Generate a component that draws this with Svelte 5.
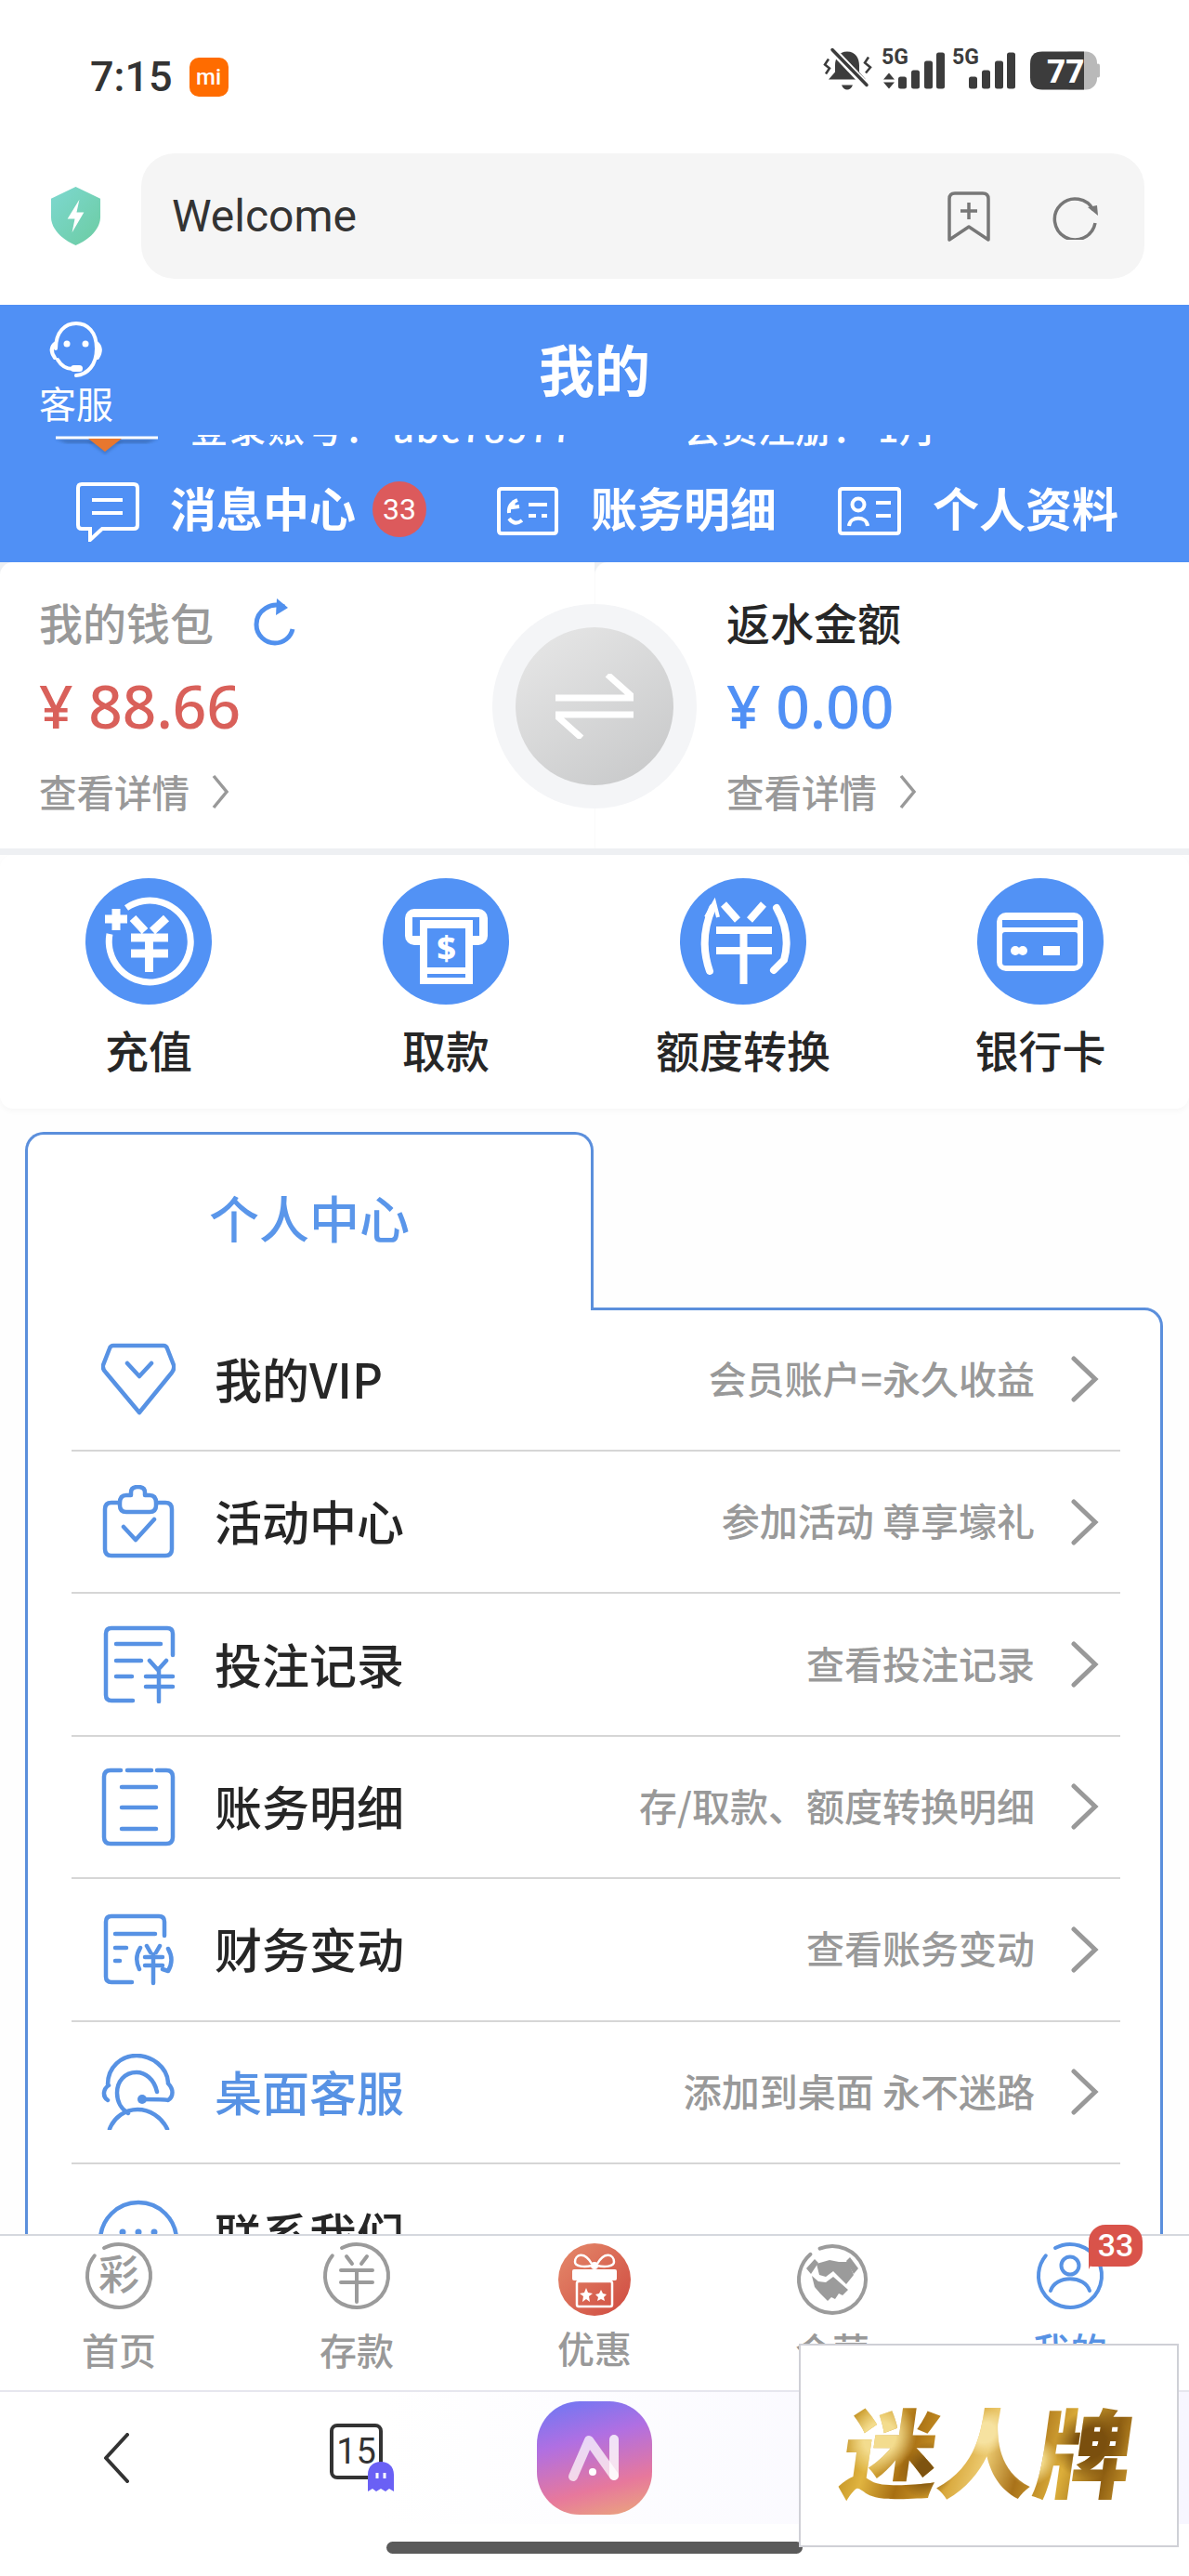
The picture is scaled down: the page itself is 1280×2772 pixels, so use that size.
<script>
  const tabs = [
    { label: '首页', id: 'home' },
    { label: '存款', id: 'deposit' },
    { label: '优惠', id: 'gift' },
    { label: '合营', id: 'deal' },
    { label: '我的', id: 'me' }
  ];
</script>

{#snippet row(label, sub, icon, blue)}
  <div class="row">
    <div class="ricon">{@render icon()}</div>
    <div class="rlabel" class:blue>{label}</div>
    {#if sub}
      <div class="rsub">{sub}</div>
      <svg class="chev" viewBox="0 0 30 50"><path d="M3 3 L26 25 L3 47" /></svg>
    {/if}
  </div>
{/snippet}

{#snippet vip()}
  <svg class="ri" viewBox="0 0 80 80"><path d="M13 4 H67 Q70 4 71 7 L78 25 Q79 29 76 33 L41 76 L5 33 Q1 29 2 25 L9 7 Q10 4 13 4Z M28 23 L41 37 L54 23" /></svg>
{/snippet}
{#snippet act()}
  <svg class="ri" viewBox="0 0 80 80"><path d="M18 19 H11 Q4 19 4 26 V69 Q4 76 11 76 H69 Q76 76 76 69 V26 Q76 19 69 19 H60 M32 11 V8 Q32 2 39.500 2 Q47 2 47 8 V11 H52 Q59 11 59 19 V22 Q59 29 52 29 H27 Q20 29 20 22 V19 Q20 11 27 11Z M24 45 L37 59 L57 37" /></svg>
{/snippet}
{#snippet bet()}
  <svg class="ri" viewBox="0 0 80 84"><path d="M34 81 H11 Q5 81 5 75 V9 Q5 3 11 3 H71 Q77 3 77 9 V32 M16 20 H64 M16 38 H43 M16 55 H33 M52 38 L61 48 L70 38 M48 55 H77 M48 66 H77 M62 48 V82" /></svg>
{/snippet}
{#snippet ledger()}
  <svg class="ri" viewBox="0 0 80 85"><path d="M21 3 H10 Q3 3 3 10 V75 Q3 82 10 82 H70 Q77 82 77 75 V10 Q77 3 70 3 H60 M28 3 H54 M22 21 H59 M22 43 H59 M22 66 H59" /></svg>
{/snippet}
{#snippet fin()}
  <svg class="ri" viewBox="0 0 80 78"><path d="M33 74 H11 Q5 74 5 68 V9 Q5 3 11 3 H62 Q68 3 68 9 V24 M15 22 H58 M15 37 H27 M15 51 H20 M42 37 Q35 48 41 60 M72 38 Q79 50 72 62 L66 60 M49 35 L53 42 M63 35 L59 42 M47 47 H66 M47 56 H66 M56 44 V75" /></svg>
{/snippet}
{#snippet desk()}
  <svg class="ri" viewBox="0 0 80 82"><path d="M7 33 C7 14 22 2 38 2 S71 14 72 31 M8 34 C2 38 1 46 7 50 M72 32 C78 38 78 46 72 50 Q70 49 44 49 M60 41 C57 27 47 20 38 20 C25 20 17 30 17 42 C17 52 22 60 29 64 M9 81 C14 68 26 60 39 60 C52 60 65 68 71 81" /><circle class="dot" cx="44" cy="49" r="5" /></svg>
{/snippet}
{#snippet contact()}
  <svg class="ri wide" viewBox="0 0 86 80"><circle cx="43" cy="46" r="41" /><circle class="dot" cx="26" cy="37" r="3.500" /><circle class="dot" cx="43" cy="37" r="3.500" /><circle class="dot" cx="60" cy="37" r="3.500" /></svg>
{/snippet}

<div class="page">
  <div class="status">
    <div class="left">
      <span class="time">7:15</span>
      <span class="mi">mi</span>
    </div>
    <svg class="sys" viewBox="0 2.500 360 90">
      <g fill="#3c3c3c">
        <path d="M52 20 C61 20 65 27 65 35 V42 L72 50 H32 L39 42 V35 C39 27 43 20 52 20Z M46 56 H58 Q56 61 52 61 Q48 61 46 56Z" />
        <path d="M34 16 L74 58" stroke="#fff" stroke-width="8" />
        <path d="M36 18 L73 56" stroke="#3c3c3c" stroke-width="3.500" stroke-linecap="round" />
        <path d="M32 28 L28 34 L33 38 L29 44 M75 26 L71 32 L77 37 L72 43" fill="none" stroke="#3c3c3c" stroke-width="2.500" />
        <text x="89" y="33" class="g5">5G</text>
        <path d="M97 43 L103 50 H91Z M97 60 L103 53 H91Z" />
        <rect x="107" y="47" width="9" height="13" rx="2.500" />
        <rect x="121" y="40" width="9" height="20" rx="2.500" />
        <rect x="135" y="30" width="9" height="30" rx="2.500" />
        <rect x="148" y="21" width="9" height="39" rx="2.500" />
        <text x="165" y="33" class="g5">5G</text>
        <rect x="183" y="47" width="9" height="13" rx="2.500" />
        <rect x="197" y="40" width="9" height="20" rx="2.500" />
        <rect x="211" y="30" width="9" height="30" rx="2.500" />
        <rect x="224" y="21" width="9" height="39" rx="2.500" />
        <rect x="280" y="20" width="41" height="41" rx="12" fill="#b9b9b9" />
        <rect x="320" y="33" width="4" height="15" rx="2" fill="#b9b9b9" />
        <path d="M262 20 H307 V61 H262 Q249 61 249 48 V33 Q249 20 262 20Z" />
        <text x="267" y="53" class="bat">77</text>
      </g>
    </svg>
  </div>

  <div class="addr">
    <svg class="shield" viewBox="0 0 58 66">
      <defs><linearGradient id="sg" x1="0" y1="0" x2="1" y2="1"><stop offset="0" stop-color="#7dd8d0" /><stop offset="1" stop-color="#6ccca2" /></linearGradient></defs>
      <path d="M29 1 L56 14 V34 C56 48 42 60 29 65 C16 60 2 48 2 34 V14Z" fill="url(#sg)" />
      <path d="M33 15 L20 36 H28 L25 51 L38 29 H30Z" fill="#fff" />
    </svg>
    <div class="bar">
      <span class="welcome">Welcome</span>
      <svg class="bm" viewBox="0 0 46 54"><path d="M8 2 H38 Q44 2 44 8 V52 L23 38 L2 52 V8 Q2 2 8 2Z M23 12 V30 M14 21 H32" /></svg>
      <svg class="rl" viewBox="0 0 50 50"><path d="M44 18 A22 22 0 1 0 46 32" /><path class="tip" d="M38 15 L49 24 L48 13Z" /></svg>
    </div>
  </div>

  <header class="head">
    <div class="top">
      <div class="svc">
        <svg class="face" viewBox="0 0 68 62"><path d="M12 30 C12 12 22 3 34 3 C46 3 56 12 56 30 C56 48 46 58 34 59 M12 24 Q4 30 11 40 M56 24 Q63 30 57 40 M14 42 Q20 52 30 52" /><circle class="fill" cx="24" cy="25" r="3.500" /><circle class="fill" cx="44" cy="25" r="3.500" /><rect class="fill" x="28" y="48" width="13" height="7" rx="3.500" /></svg>
        <span>客服</span>
      </div>
      <h1>我的</h1>
    </div>
    <div class="clip">
      <div class="clipin">
        <svg class="avatar" viewBox="0 0 130 24">
          <defs><filter id="bl"><feGaussianBlur stdDeviation="1.500" /></filter></defs>
          <path d="M10 5 H120 L108 9 H22Z" fill="#2f5a96" opacity=".55" filter="url(#bl)" />
          <path d="M44 4 H82 L63 18Z" fill="#2f5a96" opacity=".4" filter="url(#bl)" transform="translate(0 3)" />
          <path d="M10 3 H120" stroke="#fff" stroke-width="3" />
          <path d="M45 4 H81 L63 18Z" fill="#e8772e" />
        </svg>
        <span class="c1">登录账号：&nbsp;abc78977</span>
        <span class="c2">会员注册：&nbsp;1月</span>
      </div>
    </div>
    <div class="links">
      <div class="link">
        <svg class="lk msg" viewBox="0 0 68 64"><path d="M6 2 H62 Q66 2 66 6 V46 Q66 50 62 50 H28 L15 62 V50 H6 Q2 50 2 46 V6 Q2 2 6 2Z M17 19 H50 M17 33 H50" /></svg>
        <span>消息中心</span>
        <b class="bdg">33</b>
      </div>
      <div class="link">
        <svg class="lk acct" viewBox="0 0 66 52"><path d="M5 2 H61 Q64 2 64 5 V47 Q64 50 61 50 H5 Q2 50 2 47 V5 Q2 2 5 2Z M22 14 Q12 18 13 28 M13 34 Q19 42 27 36 M34 19 H54 M34 31 H42 M48 31 H54 M24 21 L17 22 L18 15" /></svg>
        <span>账务明细</span>
      </div>
      <div class="link">
        <svg class="lk prof" viewBox="0 0 68 52"><path d="M5 2 H63 Q66 2 66 5 V47 Q66 50 63 50 H5 Q2 50 2 47 V5 Q2 2 5 2Z M41 17 H57 M41 31 H57 M12 42 C13 31 31 31 32 42" /><circle cx="22" cy="19" r="6.500" /></svg>
        <span>个人资料</span>
      </div>
    </div>
  </header>

  <main class="content">
    <div class="wallet">
      <section class="wcol">
        <div class="wt gray">我的钱包
          <svg class="wr" viewBox="0 0 46 52"><path d="M34 10 C20 4 4 14 4 29 C4 41 14 49 24 49 C33 49 41 43 43 34" /><path class="fill" d="M26 1 L38 11 L25 19Z" /></svg>
        </div>
        <div class="amt red">¥ 88.66</div>
        <div class="more">查看详情
          <svg class="mc" viewBox="0 0 20 38"><path d="M3 2 L17 19 L3 36" /></svg>
        </div>
      </section>
      <section class="wcol rcol">
        <div class="wt">返水金额</div>
        <div class="amt blue">¥ 0.00</div>
        <div class="more">查看详情
          <svg class="mc" viewBox="0 0 20 38"><path d="M3 2 L17 19 L3 36" /></svg>
        </div>
      </section>
      <div class="swap">
        <div class="swapin">
          <svg viewBox="0 0 84 70"><path d="M0 26 H84 L56 1 M84 44 H0 L28 69" /></svg>
        </div>
      </div>
    </div>

    <div class="actions">
      <div class="act">
        <svg class="ac" viewBox="0 0 136 136"><circle cx="68" cy="68" r="68" class="bl" /><g class="wh"><path d="M44 32 A44 44 0 1 1 26 60" stroke-width="7" /><path d="M33 33 V56 M21 44 H45" stroke-width="9" /><path d="M51 43 L64 57 M87 43 L72 57 M49 64 H89 M49 81 H89 M68.500 64 V101" stroke-width="9" /></g></svg>
        <span>充值</span>
      </div>
      <div class="act">
        <svg class="ac" viewBox="0 0 136 136"><circle cx="68" cy="68" r="68" class="bl" /><rect x="24" y="33" width="89" height="39" rx="10" fill="#fff" /><rect x="32" y="42" width="72" height="20" fill="#5292f5" /><rect x="40" y="45" width="57" height="69" fill="#fff" /><rect x="48" y="54" width="41" height="42" fill="#5292f5" /><rect x="48" y="103" width="41" height="4" fill="#5292f5" /><text x="68.500" y="88" class="dollar">$</text></svg>
        <span>取款</span>
      </div>
      <div class="act">
        <svg class="ac" viewBox="0 0 136 136"><circle cx="68" cy="68" r="68" class="bl" /><g class="wh" stroke-width="8"><path d="M47 28 L62 45 M90 28 L75 45 M39 56 H99 M39 78 H99 M68.500 56 V114" /><path d="M35 32 Q20 66 32 100" stroke-linecap="round" /><path d="M104 32 Q120 60 112 88 L101 99" stroke-linecap="round" /><path d="M28 42 L37 26 L41 42" stroke-width="4" /></g></svg>
        <span>额度转换</span>
      </div>
      <div class="act">
        <svg class="ac" viewBox="0 0 136 136"><circle cx="68" cy="68" r="68" class="bl" /><rect x="21" y="37" width="93" height="63" rx="10" fill="#fff" /><rect x="27" y="45" width="81" height="8" fill="#5292f5" /><rect x="27" y="58" width="81" height="36" rx="3" fill="#5292f5" /><circle cx="41" cy="78" r="5" fill="#fff" /><circle cx="49" cy="78" r="5" fill="#fff" /><rect x="71" y="73" width="18" height="10" fill="#fff" /></svg>
        <span>银行卡</span>
      </div>
    </div>

    <div class="tab">个人中心</div>
    <div class="panel">
      {@render row('我的VIP', '会员账户=永久收益', vip)}
      {@render row('活动中心', '参加活动 尊享壕礼', act)}
      {@render row('投注记录', '查看投注记录', bet)}
      {@render row('账务明细', '存/取款、额度转换明细', ledger)}
      {@render row('财务变动', '查看账务变动', fin)}
      {@render row('桌面客服', '添加到桌面 永不迷路', desk, true)}
      {@render row('联系我们', '', contact)}
    </div>
  </main>

  <nav class="tabbar">
    {#each tabs as t}
      <div class="ti" class:on={t.id === 'me'} class:up={t.id === 'gift'}>
        <div class="tic">
          {#if t.id === 'home'}
            <svg viewBox="0 0 74 74"><circle cx="37" cy="37" r="34" class="gap" transform="rotate(-118 37 37)" /><text x="37" y="52" class="cai">彩</text></svg>
          {:else if t.id === 'deposit'}
            <svg viewBox="0 0 74 74"><circle cx="37" cy="37" r="34" class="gap" transform="rotate(-118 37 37)" /><path class="ln" d="M26 16 L32 24 M48 16 L42 24 M20 31 H54 M20 44 H54 M37 31 V65" /></svg>
          {:else if t.id === 'gift'}
            <svg viewBox="0 0 78 78" class="gf">
              <defs><linearGradient id="gg" x1="0" y1="0" x2="1" y2="1"><stop offset="0" stop-color="#e58a6b" /><stop offset="1" stop-color="#cf4a40" /></linearGradient></defs>
              <circle cx="39" cy="39" r="39" fill="url(#gg)" />
              <path d="M36 22 C28 8 18 12 18 20 C18 25 28 26 36 24 M42 22 C50 8 60 12 60 20 C60 25 50 26 42 24" fill="none" stroke="#fff" stroke-width="2.500" />
              <circle cx="39" cy="24" r="4" fill="#fff" />
              <rect x="15" y="28" width="48" height="12" rx="2" fill="#fff" />
              <rect x="20" y="41" width="38" height="27" rx="2" fill="none" stroke="#fff" stroke-width="2.500" />
              <path d="M30 48 L32 53 L37 54 L33 57 L34 63 L30 60 L26 63 L27 57 L23 54 L28 53Z M46 50 L48 54 L52 55 L49 58 L50 62 L46 60 L42 62 L43 58 L40 55 L44 54Z" fill="#fff" />
            </svg>
          {:else if t.id === 'deal'}
            <svg viewBox="0 0 78 78" class="gf">
              <circle cx="39" cy="39" r="36" class="gap2" transform="rotate(-112 39 39)" />
              <path d="M11 27 L20 17 L24 21 L16 33Z M67 27 L58 15 L54 19 L62 33Z" fill="#9b9b9b" />
              <path d="M22 22 L36 18 L46 20 L56 20 L62 34 L54 44 L40 30 L32 36 L25 34Z" fill="#9b9b9b" />
              <path d="M17 35 L24 41 L32 42 L40 36 L56 50 L50 56 L46 54 L42 60 L38 58 L34 62 L26 54 L20 47Z" fill="#9b9b9b" />
            </svg>
          {:else}
            <svg viewBox="0 0 74 74"><circle cx="37" cy="37" r="34" class="gap3" transform="rotate(-118 37 37)" /><circle cx="37" cy="26" r="9.500" class="pn" /><path class="pn" d="M16 53 C21 36 53 36 58 53" /></svg>
            <div class="tbadge">33</div>
          {/if}
        </div>
        <span>{t.label}</span>
      </div>
    {/each}
  </nav>

  <div class="browser">
    <svg class="back" viewBox="0 0 30 54"><path d="M27 2 L4 27 L27 52" /></svg>
    <div class="tabs">
      <span class="cnt">15</span>
      <svg class="ghost" viewBox="0 0 28 32"><path d="M0 32 V14 C0 5 6 0 14 0 C22 0 28 5 28 14 V32 L23 29 L19 32 L14 29 L9 32 L5 29Z" fill="#6a60f5" /><rect x="8.500" y="12" width="3" height="6" fill="#fff" /><rect x="16.500" y="12" width="3" height="6" fill="#fff" /></svg>
    </div>
    <div class="app">
      <svg viewBox="0 0 62 54"><path d="M8 47 L25 8 L52 46" fill="none" stroke="#fff" stroke-opacity=".72" stroke-width="10" stroke-linecap="round" stroke-linejoin="round" /><path d="M52 7 V46" fill="none" stroke="#fff" stroke-opacity=".8" stroke-width="10" stroke-linecap="round" /><circle cx="29" cy="42" r="4" fill="#fff" /></svg>
    </div>
  </div>
  <div class="homezone"><div class="indicator"></div></div>

  <aside class="promo"><span>迷人牌</span></aside>
</div>

<style>
  :global(body) { margin: 0; background: #fff; }
  .page {
    position: relative;
    width: 1280px;
    height: 2772px;
    overflow: hidden;
    display: flex;
    flex-direction: column;
    background: #fff;
    font-family: "Noto Sans CJK SC", "Noto Sans", sans-serif;
    color: #262626;
  }
  .status {
    height: 165px;
    flex: none;
    display: flex;
    align-items: center;
    justify-content: space-between;
    padding: 0 60px 0 97px;
    box-sizing: border-box;
  }
  .left { display: flex; align-items: center; gap: 18px; }
  .time { font: 500 45px/1 Roboto, sans-serif; color: #333; }
  .mi {
    width: 42px; height: 42px; border-radius: 10px;
    background: #ff6c00; color: #fff;
    font: 500 24px/42px Roboto, sans-serif; text-align: center;
  }
  .sys { width: 360px; height: 90px; }
  .g5 { font: 700 23px Roboto, sans-serif; }
  .bat { font: 800 35px Roboto, sans-serif; fill: #fff; }

  .addr {
    height: 163px;
    flex: none;
    box-sizing: border-box;
    padding: 0 48px 28px 53px;
    display: flex;
    align-items: center;
    gap: 42px;
  }
  .shield { width: 57px; height: 65px; flex: none; }
  .bar {
    flex: 1;
    height: 135px;
    background: #f5f5f5;
    border-radius: 36px;
    display: flex;
    align-items: center;
    padding: 0 49px 0 33px;
  }
  .welcome { flex: 1; font: 400 48px/1 Roboto, sans-serif; color: #333; }
  .bm { width: 46px; height: 54px; margin-right: 67px; }
  .bm path, .rl path { fill: none; stroke: #777; stroke-width: 3.500; stroke-linejoin: round; }
  .rl { width: 50px; height: 50px; }
  .rl .tip { fill: #777; stroke: none; }

  .head { height: 277px; flex: none; background: #5090f5; color: #fff; display: flex; flex-direction: column; }
  .top { height: 140px; position: relative; display: flex; align-items: center; justify-content: center; flex: none; }
  .top h1 { margin: 0 0 5px; font-size: 60px; font-weight: 700; line-height: 1; }
  .svc {
    position: absolute; left: 42px; top: 17px;
    display: flex; flex-direction: column; align-items: center;
    font-size: 40px; line-height: 48px;
  }
  .face { width: 68px; height: 62px; margin-bottom: 2px; }
  .face path { fill: none; stroke: #fff; stroke-width: 4; stroke-linecap: round; }
  .face .fill { fill: #fff; }
  .clip { height: 22px; overflow: hidden; flex: none; }
  .clipin { display: flex; align-items: flex-start; height: 22px; }
  .avatar { width: 130px; height: 24px; margin-left: 50px; flex: none; }
  .c1, .c2 { font-size: 40px; line-height: 40px; margin-top: -29px; font-weight: 500; white-space: nowrap; }
  .c1 { margin-left: 25px; letter-spacing: 1.500px; }
  .c2 { margin-left: 118px; }
  .links {
    flex: 1;
    display: grid;
    grid-template-columns: 453px 367px auto;
    padding-left: 82px;
    align-items: center;
    font-size: 50px;
    font-weight: 700;
  }
  .link { display: flex; align-items: center; line-height: 60px; }
  .link span { padding-bottom: 6px; }
  .lk { fill: none; stroke: #fff; stroke-width: 4; flex: none; }
  .msg { width: 68px; height: 64px; margin-right: 33px; margin-top: 6px; }
  .acct { width: 66px; height: 52px; margin-right: 35px; margin-top: 4px; }
  .prof { width: 68px; height: 52px; margin-right: 34px; margin-top: 4px; }
  .bdg {
    width: 58px; height: 60px; border-radius: 50%;
    background: #dc5a5c; color: #fff;
    font: 400 32px/60px Roboto, sans-serif; text-align: center;
    margin-left: 18px;
  }

  .content { height: 1799px; flex: none; overflow: hidden; background: #fefefe; }
  .wallet {
    position: relative;
    height: 315px;
    background: #eef0f3;
    display: grid;
    grid-template-columns: 640px 640px;
    align-content: start;
  }
  .wcol { height: 308px; background: #fff; box-sizing: border-box; padding: 34px 0 0 42px; border-radius: 14px 0 0 0; }
  .rcol { padding-left: 141px; border-left: 1px solid #fafafa; }
  .wt { font-size: 47px; line-height: 60px; color: #262626; display: flex; align-items: center; font-weight: 500; }
  .wt.gray { color: #999; }
  .wr { width: 46px; height: 52px; margin-left: 42px; }
  .wr path { fill: none; stroke: #5090ee; stroke-width: 5; }
  .wr .fill { fill: #5090ee; stroke: none; }
  .amt { font: 500 64px/80px "Noto Sans", sans-serif; margin-top: 21px; }
  .red { color: #d9605a; }
  .blue { color: #5090f5; }
  .more { font-size: 40.500px; font-weight: 500; line-height: 50px; margin-top: 27px; color: #999; display: flex; align-items: center; }
  .mc { width: 20px; height: 38px; margin-left: 23px; }
  .mc path { fill: none; stroke: #999; stroke-width: 3.500; }
  .swap {
    position: absolute; left: 530px; top: 45px;
    width: 220px; height: 220px; border-radius: 50%;
    background: #f4f5f7;
    display: flex; align-items: center; justify-content: center;
  }
  .swapin {
    width: 170px; height: 170px; border-radius: 50%;
    background: linear-gradient(145deg, #e8e8e8, #c6c7c8);
    display: flex; align-items: center; justify-content: center;
  }
  .swapin svg { width: 84px; height: 70px; fill: none; stroke: #fff; stroke-width: 7; }

  .actions {
    height: 273px;
    box-sizing: border-box;
    background: #fff;
    border-radius: 14px;
    display: grid;
    grid-template-columns: repeat(4, 320px);
    padding-top: 25px;
    box-shadow: 0 3px 6px rgba(0, 0, 0, .03);
  }
  .act { display: flex; flex-direction: column; align-items: center; font-size: 47px; line-height: 60px; font-weight: 500; }
  .ac { width: 136px; height: 136px; margin-bottom: 18px; }
  .bl { fill: #5292f5; }
  .wh { fill: none; stroke: #fff; }
  .dollar { font: 800 36px "Noto Sans", sans-serif; fill: #fff; text-anchor: middle; }

  .tab {
    position: relative;
    z-index: 1;
    margin: 25px 0 0 27px;
    width: 612px;
    height: 192px;
    box-sizing: border-box;
    border: 3px solid #5b8fdc;
    border-bottom: 0;
    border-radius: 20px 20px 0 0;
    background: #fff;
    color: #5a96ea;
    font-size: 54px;
    font-weight: 500;
    text-align: center;
    line-height: 178px;
  }
  .panel {
    margin: -3px 0 0 27px;
    width: 1225px;
    box-sizing: border-box;
    border: 3px solid #5b8fdc;
    border-radius: 0 20px 0 0;
    background: #fff;
    padding: 0 43px 0 47px;
    height: 1100px;
  }
  .row {
    height: 153.400px;
    box-sizing: border-box;
    border-bottom: 2px solid #d6d6d6;
    display: flex;
    align-items: center;
  }
  .row:first-child { margin-top: -1.400px; }
  .ricon { width: 154px; display: flex; justify-content: flex-start; padding-left: 32px; box-sizing: border-box; flex: none; }
  .ri { width: 80px; height: auto; display: block; fill: none; stroke: #5792e4; stroke-width: 4.500; stroke-linecap: round; stroke-linejoin: round; }
  .ri.wide { width: 86px; margin-left: -3px; }
  .ri .dot { fill: #5792e4; stroke: none; }
  .rlabel { flex: 1; font-size: 51px; line-height: 60px; padding-bottom: 3px; font-weight: 500; color: #262626; }
  .rlabel.blue { color: #5792e4; }
  .rsub { font-size: 41px; font-weight: 500; line-height: 50px; padding-bottom: 5px; color: #999; }
  .chev { width: 30px; height: 50px; margin: 0 23px 0 39px; flex: none; }
  .chev path { fill: none; stroke: #999; stroke-width: 5; stroke-linecap: round; }

  .tabbar {
    height: 168px;
    flex: none;
    box-sizing: border-box;
    border-top: 2px solid #d5d8de;
    background: #fff;
    display: grid;
    grid-template-columns: repeat(5, 256px);
    padding-top: 6px;
  }
  .ti { display: flex; flex-direction: column; align-items: center; color: #999; font-size: 40px; font-weight: 500; line-height: 48px; }
  .ti span { margin-top: 18px; }
  .ti.up span { margin-top: 16px; }
  .ti.on { color: #5792e4; }
  .tic { position: relative; width: 74px; height: 74px; }
  .tic svg { width: 74px; height: 74px; display: block; overflow: visible; }
  .tic .gf { width: 78px; height: 78px; margin: 2px 0 0 -2px; }
  .gap, .gap2, .gap3 { fill: none; stroke: #9b9b9b; stroke-width: 4; stroke-linecap: round; }
  .gap { stroke-dasharray: 200 13.600; }
  .gap2 { stroke-dasharray: 214 12.200; }
  .gap3 { stroke: #5792e4; stroke-dasharray: 200 13.600; }
  .pn { fill: none; stroke: #5792e4; stroke-width: 4; stroke-linecap: round; }
  .cai { font: 500 44px "Noto Sans CJK SC", sans-serif; fill: #9b9b9b; text-anchor: middle; }
  .ln { fill: none; stroke: #9b9b9b; stroke-width: 4; stroke-linecap: round; }
  .tbadge {
    position: absolute; left: 57px; top: -18px;
    width: 58px; height: 45px;
    background: #d9534a; color: #fff;
    border-radius: 18px 18px 18px 4px;
    font: 500 34px/45px Roboto, sans-serif; text-align: center;
  }
  .tbadge::after {
    content: "";
    position: absolute; left: 0; top: 38px;
    border-left: 5px solid #d9534a; border-bottom: 10px solid transparent;
  }

  .browser {
    height: 144px;
    flex: none;
    box-sizing: border-box;
    border-top: 2px solid #e6e6ee;
    background: linear-gradient(90deg, #fff 32%, #f7f6ff 100%);
    display: flex;
    align-items: center;
    padding-left: 110px;
  }
  .back { width: 30px; height: 54px; margin-right: 215px; }
  .back path { fill: none; stroke: #333; stroke-width: 4; stroke-linejoin: round; stroke-linecap: round; }
  .tabs { position: relative; width: 70px; height: 74px; margin-right: 153px; }
  .cnt {
    position: absolute; left: 0; top: 0;
    width: 57px; height: 60px; box-sizing: border-box;
    border: 4px solid #333; border-radius: 8px;
    font: 400 38px/52px Roboto, sans-serif; text-align: center; color: #333;
  }
  .ghost { position: absolute; left: 41px; top: 41px; width: 28px; height: 32px; }
  .app {
    width: 124px; height: 122px; border-radius: 46px;
    background: linear-gradient(165deg, #6a78f5 0%, #b06fe2 35%, #e7789c 72%, #eaa97a 100%);
    display: flex; align-items: center; justify-content: center;
  }
  .app svg { width: 62px; height: 54px; }
  .homezone { height: 56px; flex: none; padding-top: 19px; box-sizing: border-box; display: flex; justify-content: center; }
  .indicator { width: 448px; height: 13px; border-radius: 7px; background: #5a5a5a; }

  .promo {
    position: absolute; left: 860px; top: 2522px;
    width: 409px; height: 219px;
    box-sizing: border-box;
    border: 2px solid #cfd0d6;
    background: #fff;
    display: flex; align-items: center; justify-content: center;
    padding-top: 8px;
  }
  .promo span {
    font-size: 104px; font-weight: 900; line-height: 1.100;
    transform: skewX(-8deg);
    background:
      radial-gradient(circle at 12% 40%, #f3dc8e 0 6%, transparent 14%),
      radial-gradient(circle at 30% 70%, #7e5310 0 5%, transparent 13%),
      radial-gradient(circle at 48% 35%, #f6e2a0 0 6%, transparent 14%),
      radial-gradient(circle at 66% 62%, #f2d988 0 5%, transparent 12%),
      radial-gradient(circle at 85% 45%, #7a4f0e 0 6%, transparent 14%),
      linear-gradient(100deg, #b8861b 0%, #e0b440 12%, #a86f12 24%, #d4a030 38%, #ecca70 50%, #a9721a 62%, #dcae3a 76%, #8f5f12 90%, #c8962c 100%);
    -webkit-background-clip: text;
    background-clip: text;
    color: transparent;
  }
</style>
